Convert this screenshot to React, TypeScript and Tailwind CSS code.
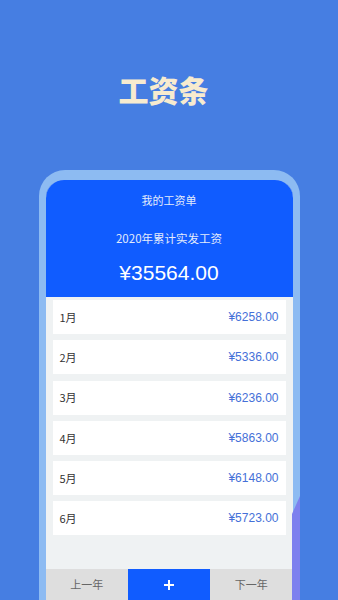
const rows = [
  { m: "1月", v: "¥6258.00" },
  { m: "2月", v: "¥5336.00" },
  { m: "3月", v: "¥6236.00" },
  { m: "4月", v: "¥5863.00" },
  { m: "5月", v: "¥6148.00" },
  { m: "6月", v: "¥5723.00" },
];

const font = { fontFamily: '"Noto Sans CJK SC", "Noto Sans", sans-serif' };
const latin = { fontFamily: '"Liberation Sans", "Noto Sans CJK SC", Arial, sans-serif' };

export default function App() {
  return (
    <div
      className="relative flex h-[600px] w-full flex-col items-center overflow-hidden bg-[#467ee2]"
      style={font}
    >
      <h1 className="mr-[11px] pt-[70px] text-[30px] font-black leading-[38px] text-[#f7ebcf]">
        工资条
      </h1>

      <div className="relative mt-[62px] flex w-[261px] flex-1 flex-col rounded-t-[26px] border-x-[7px] border-t-[10px] border-[#8dbbf2]">
        {/* purple shade on the lower right of the frame */}
        <svg
          className="absolute right-[-7px] top-[316px] h-[120px] w-[8px]"
          viewBox="0 0 8 120"
          preserveAspectRatio="none"
        >
          <polygon points="8,0 8,120 0,120 0,18" fill="#7d80ee" />
        </svg>

        <div className="flex flex-1 flex-col overflow-hidden rounded-t-[18px] bg-[#eff2f3]">
          <div className="flex h-[117px] flex-col items-center bg-[#105cff] text-white">
            <div className="mt-[12px] text-[11px] leading-[16px] text-[#e3ebfb]">我的工资单</div>
            <div className="mt-[22px] text-[11.5px] leading-[16px] text-[#e3ebfb]">2020年累计实发工资</div>
            <div className="mt-[14px] text-[21px] leading-[26px]" style={latin}>
              ¥35564.00
            </div>
          </div>

          <div className="flex flex-1 flex-col gap-[6.3px] px-[7px] pt-[3px]">
            {rows.map((r) => (
              <div
                key={r.m}
                className="flex h-[34px] items-center justify-between bg-white pl-[7px] pr-[7px]"
              >
                <span className="text-[11px] text-[#333]">{r.m}</span>
                <span className="text-[12px] text-[#4470d8]" style={latin}>
                  {r.v}
                </span>
              </div>
            ))}
          </div>

          <div className="grid h-[31px] grid-cols-3 text-[11px] text-[#666]">
            <div className="flex items-center justify-center bg-[#dedede]">上一年</div>
            <div className="flex items-center justify-center bg-[#105cff]">
              <svg width="12" height="12" viewBox="0 0 12 12">
                <path d="M6 1v10M1 6h10" stroke="white" strokeWidth="2" />
              </svg>
            </div>
            <div className="flex items-center justify-center bg-[#dedede]">下一年</div>
          </div>
        </div>
      </div>
    </div>
  );
}
